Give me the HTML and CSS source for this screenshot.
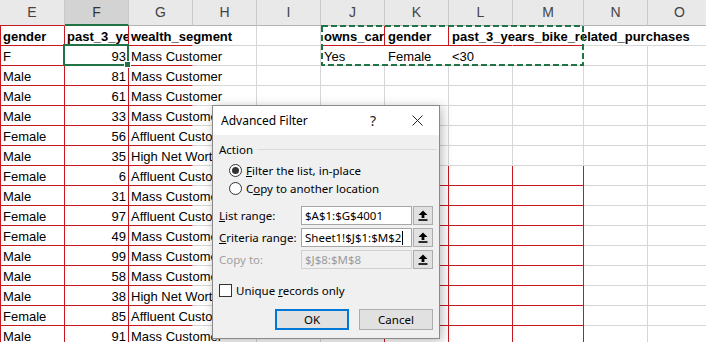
FILE: index.html
```html
<!DOCTYPE html>
<html lang="en">
<head>
<meta charset="utf-8">
<title>Advanced Filter</title>
<link rel="stylesheet" href="styles.css">
</head>
<body>
<div class="sheet">
  <div class="row hdr">
    <div class="h he">E</div><div class="h sel">F</div><div class="h">G</div><div class="h">H</div><div class="h">I</div><div class="h">J</div><div class="h">K</div><div class="h">L</div><div class="h">M</div><div class="h">N</div><div class="h">O</div>
  </div>
  <div class="row">
    <div class="c e b">gender</div><div class="c f b lft">past_3_years_bike_related_purchases</div><div class="c g b">wealth_segment</div><div class="c"></div><div class="c"></div><div class="c b rr rb">owns_car</div><div class="c b rr rb">gender</div><div class="c b ov rb">past_3_years_bike_related_purchases</div><div class="c nr rb"></div><div class="c nr"></div><div class="c"></div>
  </div>
  <div class="row">
    <div class="c e">F</div><div class="c f">93</div><div class="c g">Mass Customer</div><div class="c"></div><div class="c"></div><div class="c nr">Yes</div><div class="c nr">Female</div><div class="c nr">&lt;30</div><div class="c nr"></div><div class="c"></div><div class="c"></div>
  </div>
  <div class="row">
    <div class="c e">Male</div><div class="c f">81</div><div class="c g">Mass Customer</div><div class="c"></div><div class="c"></div><div class="c"></div><div class="c"></div><div class="c"></div><div class="c"></div><div class="c"></div><div class="c"></div>
  </div>
  <div class="row">
    <div class="c e">Male</div><div class="c f">61</div><div class="c g">Mass Customer</div><div class="c"></div><div class="c"></div><div class="c"></div><div class="c"></div><div class="c"></div><div class="c"></div><div class="c"></div><div class="c"></div>
  </div>
  <div class="row">
    <div class="c e">Male</div><div class="c f">33</div><div class="c g">Mass Customer</div><div class="c"></div><div class="c"></div><div class="c"></div><div class="c"></div><div class="c"></div><div class="c"></div><div class="c"></div><div class="c"></div>
  </div>
  <div class="row">
    <div class="c e">Female</div><div class="c f">56</div><div class="c g">Affluent Customer</div><div class="c"></div><div class="c"></div><div class="c"></div><div class="c"></div><div class="c"></div><div class="c"></div><div class="c"></div><div class="c"></div>
  </div>
  <div class="row">
    <div class="c e">Male</div><div class="c f">35</div><div class="c g">High Net Worth</div><div class="c"></div><div class="c"></div><div class="c"></div><div class="c"></div><div class="c"></div><div class="c"></div><div class="c"></div><div class="c"></div>
  </div>
  <div class="row">
    <div class="c e">Female</div><div class="c f">6</div><div class="c g">Affluent Customer</div><div class="c"></div><div class="c"></div><div class="c rr rb"></div><div class="c rr rb"></div><div class="c rr rb"></div><div class="c rr rb"></div><div class="c"></div><div class="c"></div>
  </div>
  <div class="row">
    <div class="c e">Male</div><div class="c f">31</div><div class="c g">Mass Customer</div><div class="c"></div><div class="c"></div><div class="c rr rb"></div><div class="c rr rb"></div><div class="c rr rb"></div><div class="c rr rb"></div><div class="c"></div><div class="c"></div>
  </div>
  <div class="row">
    <div class="c e">Female</div><div class="c f">97</div><div class="c g">Affluent Customer</div><div class="c"></div><div class="c"></div><div class="c rr rb"></div><div class="c rr rb"></div><div class="c rr rb"></div><div class="c rr rb"></div><div class="c"></div><div class="c"></div>
  </div>
  <div class="row">
    <div class="c e">Female</div><div class="c f">49</div><div class="c g">Mass Customer</div><div class="c"></div><div class="c"></div><div class="c rr rb"></div><div class="c rr rb"></div><div class="c rr rb"></div><div class="c rr rb"></div><div class="c"></div><div class="c"></div>
  </div>
  <div class="row">
    <div class="c e">Male</div><div class="c f">99</div><div class="c g">Mass Customer</div><div class="c"></div><div class="c"></div><div class="c rr rb"></div><div class="c rr rb"></div><div class="c rr rb"></div><div class="c rr rb"></div><div class="c"></div><div class="c"></div>
  </div>
  <div class="row">
    <div class="c e">Male</div><div class="c f">58</div><div class="c g">Mass Customer</div><div class="c"></div><div class="c"></div><div class="c rr rb"></div><div class="c rr rb"></div><div class="c rr rb"></div><div class="c rr rb"></div><div class="c"></div><div class="c"></div>
  </div>
  <div class="row">
    <div class="c e">Male</div><div class="c f">38</div><div class="c g">High Net Worth</div><div class="c"></div><div class="c"></div><div class="c rr rb"></div><div class="c rr rb"></div><div class="c rr rb"></div><div class="c rr rb"></div><div class="c"></div><div class="c"></div>
  </div>
  <div class="row">
    <div class="c e">Female</div><div class="c f">85</div><div class="c g">Affluent Customer</div><div class="c"></div><div class="c"></div><div class="c rr rb"></div><div class="c rr rb"></div><div class="c rr rb"></div><div class="c rr rb"></div><div class="c"></div><div class="c"></div>
  </div>
  <div class="row">
    <div class="c e">Male</div><div class="c f">91</div><div class="c g">Mass Customer</div><div class="c"></div><div class="c"></div><div class="c rr rb"></div><div class="c rr rb"></div><div class="c rr rb"></div><div class="c rr rb"></div><div class="c"></div><div class="c"></div>
  </div>

  <div class="selection"><span class="handle"></span></div>
  <svg class="ants" width="263" height="41" viewBox="0 0 263 41"><rect x="1" y="1" width="261" height="39" fill="none" stroke="#217346" stroke-width="2" stroke-dasharray="6 3"/></svg>

  <div class="dlg">
    <div class="title">
      <span class="title-text">Advanced Filter</span>
      <span class="help">?</span>
      <span class="close"><svg width="11" height="11" viewBox="0 0 11 11"><path d="M0.5 0.5 L10.5 10.5 M10.5 0.5 L0.5 10.5" stroke="#222" stroke-width="1" fill="none"/></svg></span>
    </div>
    <div class="body">
      <div class="group-head"><span>Action</span><span class="group-line"></span></div>
      <div class="radio-row first"><span class="radio on"></span><span><u>F</u>ilter the list, in-place</span></div>
      <div class="radio-row"><span class="radio"></span><span>C<u>o</u>py to another location</span></div>
      <div class="fields">
        <div class="field"><span class="label"><u>L</u>ist range:</span><span class="input">$A$1:$G$4001</span><span class="pick"><svg width="10" height="11" viewBox="0 0 10 11"><path d="M5 0.5 L9.5 5 H6.4 V8 H3.6 V5 H0.5 Z" fill="#000"/><rect x="0.5" y="9.2" width="9" height="1.6" fill="#000"/></svg></span></div>
        <div class="field"><span class="label"><u>C</u>riteria range:</span><span class="input">Sheet1!$J$1:$M$2<span class="caret"></span></span><span class="pick"><svg width="10" height="11" viewBox="0 0 10 11"><path d="M5 0.5 L9.5 5 H6.4 V8 H3.6 V5 H0.5 Z" fill="#000"/><rect x="0.5" y="9.2" width="9" height="1.6" fill="#000"/></svg></span></div>
        <div class="field"><span class="label dis">Copy to:</span><span class="input dis">$J$8:$M$8</span><span class="pick"><svg width="10" height="11" viewBox="0 0 10 11"><path d="M5 0.5 L9.5 5 H6.4 V8 H3.6 V5 H0.5 Z" fill="#000"/><rect x="0.5" y="9.2" width="9" height="1.6" fill="#000"/></svg></span></div>
      </div>
      <div class="check-row"><span class="check"></span><span>Unique <u>r</u>ecords only</span></div>
      <div class="buttons"><span class="btn def">OK</span><span class="btn">Cancel</span></div>
    </div>
  </div>
</div>
</body>
</html>
```
FILE: styles.css
```css
html, body {
  margin: 0;
  padding: 0;
  width: 706px;
  height: 342px;
  overflow: hidden;
  background: #fff;
}

.sheet {
  position: relative;
  width: 706px;
  height: 342px;
  overflow: hidden;
  font-family: "Liberation Sans", Arial, sans-serif;
  font-size: 13px;
  color: #000;
}

.row {
  display: grid;
  grid-template-columns: 65px 64px 64px 64px 64px 64px 64px 64px 71px 64px 64px;
  height: 20px;
}

.row.hdr {
  height: 26px;
}

.h {
  box-sizing: border-box;
  background: #e9e9e9;
  border-right: 1px solid #c9c9c9;
  border-bottom: 1px solid #b4b4b4;
  text-align: center;
  font-size: 14px;
  line-height: 25px;
  color: #444;
}

.h.he {
  border-bottom-color: #c8171e;
}

.h.sel {
  background: #d3d3d3;
  border-bottom: 2px solid #217346;
  line-height: 24px;
  color: #333;
}

.c {
  box-sizing: border-box;
  border-right: 1px solid #d6d6d6;
  border-bottom: 1px solid #d6d6d6;
  padding: 2px 2px 0 3px;
  line-height: 17px;
  white-space: nowrap;
  overflow: hidden;
}

.b {
  font-weight: bold;
}

.e {
  border-left: 1px solid #c8171e;
  border-right-color: #c8171e;
  border-bottom-color: #c8171e;
  padding-left: 2px;
}

.f {
  border-right-color: #c8171e;
  border-bottom-color: #c8171e;
  text-align: right;
}

.f.lft {
  text-align: left;
  padding-left: 2px;
  padding-right: 0;
}

.g {
  overflow: visible;
  border-right-color: transparent;
  border-bottom-color: #c8171e;
  padding-left: 2px;
}

.ov {
  overflow: visible;
  border-right-color: transparent;
}

.nr {
  border-right-color: transparent;
}

.rr {
  border-right-color: #c8171e;
}

.rb {
  border-bottom-color: #c8171e;
}

.selection {
  position: absolute;
  left: 63px;
  top: 44px;
  width: 66px;
  height: 22px;
  box-sizing: border-box;
  border: 2px solid #217346;
}

.handle {
  position: absolute;
  right: -4px;
  bottom: -4px;
  width: 7px;
  height: 7px;
  box-sizing: border-box;
  background: #217346;
  border: 1px solid #fff;
}

.ants {
  position: absolute;
  left: 321px;
  top: 25px;
}

/* dialog */
.dlg {
  position: absolute;
  left: 212px;
  top: 105px;
  width: 228px;
  height: 234px;
  box-sizing: border-box;
  border: 1px solid #8a8a8a;
  background: #f0f0f0;
  box-shadow: 2px 2px 10px rgba(0, 0, 0, 0.28);
  font-family: "Noto Sans", "Open Sans", sans-serif;
  font-size: 11.5px;
  color: #000;
}

.title {
  height: 29px;
  background: #fff;
  display: flex;
  align-items: center;
  padding: 0 7px 0 8px;
}

.title-text {
  flex: 1;
  font-size: 12px;
}

.help {
  width: 24px;
  text-align: center;
  font-size: 14px;
  color: #222;
  margin-right: 17px;
}

.close {
  width: 30px;
  display: flex;
  justify-content: center;
  align-items: center;
}

.body {
  padding: 0 6px;
}

.group-head {
  display: flex;
  align-items: center;
  height: 18px;
  margin-top: 5px;
}

.group-line {
  flex: 1;
  height: 1px;
  background: #dadada;
  margin-left: 4px;
  margin-right: -4px;
}

.radio-row {
  display: flex;
  align-items: center;
  gap: 4px;
  height: 18px;
  padding-left: 10px;
}

.radio-row.first {
  margin-top: 3px;
}

.radio {
  width: 13px;
  height: 13px;
  box-sizing: border-box;
  border: 1px solid #333;
  border-radius: 50%;
  background: #fff;
  display: flex;
  align-items: center;
  justify-content: center;
}

.radio.on::after {
  content: "";
  width: 7px;
  height: 7px;
  border-radius: 50%;
  background: #333;
}

.fields {
  display: flex;
  flex-direction: column;
  gap: 3px;
  margin-top: 9px;
}

.field {
  display: flex;
  align-items: center;
  height: 19px;
}

.label {
  width: 82px;
}

.label.dis {
  color: #a0a0a0;
}

.input {
  width: 111px;
  height: 19px;
  box-sizing: border-box;
  border: 1px solid #a6a6a6;
  background: #fff;
  padding-left: 3px;
  line-height: 17px;
  white-space: nowrap;
  overflow: hidden;
}

.input.dis {
  background: #f0f0f0;
  border-color: #d0d0d0;
  color: #9a9a9a;
}

.caret {
  display: inline-block;
  width: 1px;
  height: 14px;
  background: #000;
  vertical-align: -3px;
  margin-left: 1px;
}

.pick {
  width: 20px;
  height: 19px;
  margin-left: 1px;
  box-sizing: border-box;
  border: 1px solid #adadad;
  background: #e1e1e1;
  display: flex;
  align-items: center;
  justify-content: center;
}

.check-row {
  display: flex;
  align-items: center;
  gap: 4px;
  height: 18px;
  margin-top: 12px;
}

.check {
  width: 13px;
  height: 13px;
  box-sizing: border-box;
  border: 1px solid #333;
  background: #fff;
}

.buttons {
  display: flex;
  justify-content: flex-end;
  gap: 10px;
  margin-top: 10px;
}

.btn {
  width: 74px;
  height: 21px;
  box-sizing: border-box;
  border: 1px solid #adadad;
  background: #e1e1e1;
  display: flex;
  align-items: center;
  justify-content: center;
}

.btn.def {
  border: 2px solid #0078d7;
}
```
